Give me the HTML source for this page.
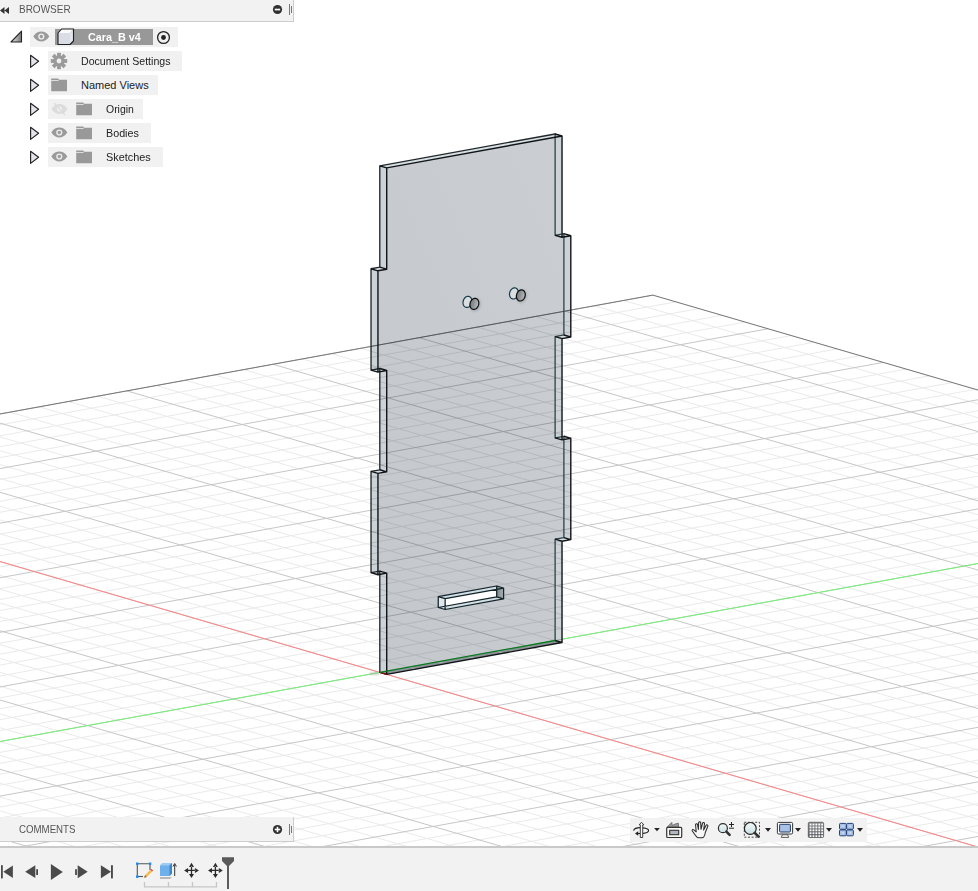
<!DOCTYPE html>
<html><head><meta charset="utf-8">
<style>
html,body{margin:0;padding:0;}
body{width:978px;height:891px;overflow:hidden;position:relative;background:#fff;font-family:"Liberation Sans",sans-serif;}
.abs{position:absolute;}
#vp{position:absolute;left:0;top:0;}
.hdr{position:absolute;left:0;width:293px;background:#f2f2f2;border-right:1px solid #cdcdcd;border-bottom:1px solid #cdcdcd;}
.hdr .t{position:absolute;left:19px;font-size:11px;color:#555;transform-origin:0 0;}
.row{position:absolute;height:20px;background:#f1f1f1;}
.lbl{position:absolute;font-size:11px;color:#222;white-space:nowrap;transform:scaleX(0.963);transform-origin:0 0;}
#bar{position:absolute;left:0;top:846px;width:978px;height:45px;background:#f2f2f2;border-top:2px solid #c9c9c9;box-sizing:border-box;}
#nav{position:absolute;left:630px;top:818px;width:237px;height:24px;background:#f2f2f2;}
</style></head>
<body>
<svg id="vp" width="978" height="846" viewBox="0 0 978 846">
<path d="M-1077.30,620.95L675.90,301.87M-1054.26,627.68L698.94,308.59M-1031.22,634.40L721.98,315.32M-1008.18,641.13L745.02,322.04M-962.10,654.58L791.10,335.50M-939.06,661.30L814.14,342.22M-916.02,668.03L837.18,348.95M-892.98,674.75L860.22,355.67M-846.90,688.20L906.30,369.12M-823.86,694.93L929.34,375.85M-800.82,701.66L952.38,382.57M-777.78,708.38L975.42,389.30M-731.70,721.83L1021.50,402.75M-708.66,728.56L1044.54,409.47M-685.62,735.28L1067.58,416.20M-662.58,742.01L1090.62,422.93M-616.50,755.46L1136.70,436.38M-593.46,762.18L1159.74,443.10M-570.42,768.91L1182.78,449.83M-547.38,775.63L1205.82,456.55M-501.30,789.09L1251.90,470.00M-478.26,795.81L1274.94,476.73M-455.22,802.54L1297.98,483.45M-432.18,809.26L1321.02,490.18M-386.10,822.71L1367.10,503.63M-363.06,829.44L1390.14,510.36M-340.02,836.16L1413.18,517.08M-316.98,842.89L1436.22,523.81M-270.90,856.34L1482.30,537.26M-247.86,863.06L1505.34,543.98M-224.82,869.79L1528.38,550.71M-201.78,876.52L1551.42,557.43M-155.70,889.97L1597.50,570.88M-132.66,896.69L1620.54,577.61M-109.62,903.42L1643.58,584.33M-86.58,910.14L1666.62,591.06M-40.50,923.59L1712.70,604.51M-17.46,930.32L1735.74,611.24M5.58,937.04L1758.78,617.96M28.62,943.77L1781.82,624.69M74.70,957.22L1827.90,638.14M97.74,963.95L1850.94,644.86M120.78,970.67L1873.98,651.59M143.82,977.40L1897.02,658.31M189.90,990.85L1943.10,671.76M212.94,997.57L1966.14,678.49M235.98,1004.30L1989.18,685.22M259.02,1011.02L2012.22,691.94M-1100.34,614.23L282.06,1017.75M-1071.12,608.91L311.28,1012.43M-1012.68,598.27L369.72,1001.79M-983.46,592.95L398.94,996.48M-954.24,587.64L428.16,991.16M-925.02,582.32L457.38,985.84M-866.58,571.68L515.82,975.20M-837.36,566.36L545.04,969.89M-808.14,561.05L574.26,964.57M-778.92,555.73L603.48,959.25M-720.48,545.09L661.92,948.61M-691.26,539.77L691.14,943.30M-662.04,534.46L720.36,937.98M-632.82,529.14L749.58,932.66M-574.38,518.50L808.02,922.02M-545.16,513.18L837.24,916.71M-515.94,507.87L866.46,911.39M-486.72,502.55L895.68,906.07M-428.28,491.91L954.12,895.43M-399.06,486.59L983.34,890.12M-369.84,481.27L1012.56,884.80M-340.62,475.96L1041.78,879.48M-282.18,465.32L1100.22,868.84M-252.96,460.00L1129.44,863.53M-223.74,454.68L1158.66,858.21M-194.52,449.37L1187.88,852.89M-136.08,438.73L1246.32,842.25M-106.86,433.41L1275.54,836.93M-77.64,428.09L1304.76,831.62M-48.42,422.78L1333.98,826.30M10.02,412.14L1392.42,815.66M39.24,406.82L1421.64,810.34M68.46,401.50L1450.86,805.03M97.68,396.19L1480.08,799.71M156.12,385.55L1538.52,789.07M185.34,380.23L1567.74,783.75M214.56,374.91L1596.96,778.44M243.78,369.60L1626.18,773.12M302.22,358.96L1684.62,762.48M331.44,353.64L1713.84,757.16M360.66,348.32L1743.06,751.85M389.88,343.01L1772.28,746.53M448.32,332.37L1830.72,735.89M477.54,327.05L1859.94,730.57M506.76,321.73L1889.16,725.26M535.98,316.42L1918.38,719.94M594.42,305.78L1976.82,709.30M623.64,300.46L2006.04,703.98M652.86,295.14L2035.26,698.67" stroke="#eaeaea" stroke-width="1" fill="none"/>
<path d="M-1100.34,614.23L652.86,295.14M-985.14,647.85L768.06,328.77M-869.94,681.48L883.26,362.40M-754.74,715.11L998.46,396.02M-639.54,748.73L1113.66,429.65M-524.34,782.36L1228.86,463.28M-409.14,815.99L1344.06,496.90M-293.94,849.61L1459.26,530.53M-178.74,883.24L1574.46,564.16M-63.54,916.87L1689.66,597.79M51.66,950.49L1804.86,631.41M166.86,984.12L1920.06,665.04M282.06,1017.75L2035.26,698.67M-1041.90,603.59L340.50,1007.11M-895.80,577.00L486.60,980.52M-749.70,550.41L632.70,953.93M-603.60,523.82L778.80,927.34M-457.50,497.23L924.90,900.75M-311.40,470.64L1071.00,874.16M-165.30,444.05L1217.10,847.57M-19.20,417.46L1363.20,820.98M126.90,390.87L1509.30,794.39M273.00,364.28L1655.40,767.80M419.10,337.69L1801.50,741.21M565.20,311.10L1947.60,714.62" stroke="#c6c6c6" stroke-width="1" fill="none"/>
<path d="M-1100.34,614.23L652.86,295.14L2035.26,698.67" stroke="#787878" stroke-width="1" fill="none"/>
<path d="M-311.40,470.64L1071.00,874.16" stroke="#ff8585" stroke-width="1" fill="none"/>
<path d="M-409.14,815.99L1344.06,496.90" stroke="#74f274" stroke-width="1" fill="none"/>
<defs><clipPath id="pc"><polygon points="379.80,672.40 379.80,571.10 371.03,572.69 371.03,471.39 379.80,469.79 379.80,368.49 371.03,370.08 371.03,268.78 379.80,267.18 379.80,165.88 555.12,133.97 555.12,235.28 563.89,233.68 563.89,334.98 555.12,336.58 555.12,437.88 563.89,436.29 563.89,537.59 555.12,539.19 555.12,640.49" /><polygon points="386.71,674.42 386.71,573.11 377.95,574.71 377.95,473.41 386.71,471.81 386.71,370.51 377.95,372.10 377.95,270.80 386.71,269.20 386.71,167.90 562.03,135.99 562.03,237.29 570.80,235.70 570.80,337.00 562.03,338.60 562.03,439.90 570.80,438.31 570.80,539.61 562.03,541.21 562.03,642.51" /><polygon points="379.80,672.40 379.80,571.10 386.71,573.11 386.71,674.42" /><polygon points="379.80,571.10 371.03,572.69 377.95,574.71 386.71,573.11" /><polygon points="371.03,572.69 371.03,471.39 377.95,473.41 377.95,574.71" /><polygon points="371.03,471.39 379.80,469.79 386.71,471.81 377.95,473.41" /><polygon points="379.80,469.79 379.80,368.49 386.71,370.51 386.71,471.81" /><polygon points="379.80,368.49 371.03,370.08 377.95,372.10 386.71,370.51" /><polygon points="371.03,370.08 371.03,268.78 377.95,270.80 377.95,372.10" /><polygon points="371.03,268.78 379.80,267.18 386.71,269.20 377.95,270.80" /><polygon points="379.80,267.18 379.80,165.88 386.71,167.90 386.71,269.20" /><polygon points="379.80,165.88 555.12,133.97 562.03,135.99 386.71,167.90" /><polygon points="555.12,133.97 555.12,235.28 562.03,237.29 562.03,135.99" /><polygon points="555.12,235.28 563.89,233.68 570.80,235.70 562.03,237.29" /><polygon points="563.89,233.68 563.89,334.98 570.80,337.00 570.80,235.70" /><polygon points="563.89,334.98 555.12,336.58 562.03,338.60 570.80,337.00" /><polygon points="555.12,336.58 555.12,437.88 562.03,439.90 562.03,338.60" /><polygon points="555.12,437.88 563.89,436.29 570.80,438.31 562.03,439.90" /><polygon points="563.89,436.29 563.89,537.59 570.80,539.61 570.80,438.31" /><polygon points="563.89,537.59 555.12,539.19 562.03,541.21 570.80,539.61" /><polygon points="555.12,539.19 555.12,640.49 562.03,642.51 562.03,541.21" /><polygon points="555.12,640.49 379.80,672.40 386.71,674.42 562.03,642.51" /></clipPath><linearGradient id="pg" x1="1" y1="0" x2="0" y2="1"><stop offset="0" stop-color="#cbcfd4"/><stop offset="1" stop-color="#c4c8cd"/></linearGradient></defs>
<g clip-path="url(#pc)"><rect x="360" y="120" width="230" height="570" fill="url(#pg)"/></g>
<polygon points="379.80,672.40 379.80,571.10 386.71,573.11 386.71,674.42" fill="#cbd3d8"/>
<polygon points="379.80,571.10 371.03,572.69 377.95,574.71 386.71,573.11" fill="#d6dfe3"/>
<polygon points="371.03,572.69 371.03,471.39 377.95,473.41 377.95,574.71" fill="#cbd3d8"/>
<polygon points="371.03,471.39 379.80,469.79 386.71,471.81 377.95,473.41" fill="#d6dfe3"/>
<polygon points="379.80,469.79 379.80,368.49 386.71,370.51 386.71,471.81" fill="#cbd3d8"/>
<polygon points="379.80,368.49 371.03,370.08 377.95,372.10 386.71,370.51" fill="#d6dfe3"/>
<polygon points="371.03,370.08 371.03,268.78 377.95,270.80 377.95,372.10" fill="#cbd3d8"/>
<polygon points="371.03,268.78 379.80,267.18 386.71,269.20 377.95,270.80" fill="#d6dfe3"/>
<polygon points="379.80,267.18 379.80,165.88 386.71,167.90 386.71,269.20" fill="#cbd3d8"/>
<polygon points="379.80,165.88 555.12,133.97 562.03,135.99 386.71,167.90" fill="#d6dfe3"/>
<polygon points="555.12,133.97 555.12,235.28 562.03,237.29 562.03,135.99" fill="#cdd2d6"/>
<polygon points="555.12,235.28 563.89,233.68 570.80,235.70 562.03,237.29" fill="#d6dfe3"/>
<polygon points="563.89,233.68 563.89,334.98 570.80,337.00 570.80,235.70" fill="#cdd2d6"/>
<polygon points="563.89,334.98 555.12,336.58 562.03,338.60 570.80,337.00" fill="#d6dfe3"/>
<polygon points="555.12,336.58 555.12,437.88 562.03,439.90 562.03,338.60" fill="#cdd2d6"/>
<polygon points="555.12,437.88 563.89,436.29 570.80,438.31 562.03,439.90" fill="#d6dfe3"/>
<polygon points="563.89,436.29 563.89,537.59 570.80,539.61 570.80,438.31" fill="#cdd2d6"/>
<polygon points="563.89,537.59 555.12,539.19 562.03,541.21 570.80,539.61" fill="#d6dfe3"/>
<polygon points="555.12,539.19 555.12,640.49 562.03,642.51 562.03,541.21" fill="#cdd2d6"/>
<polygon points="555.12,640.49 379.80,672.40 386.71,674.42 562.03,642.51" fill="#8c9398"/>
<g clip-path="url(#pc)"><path d="M-1077.30,620.95L675.90,301.87M-1054.26,627.68L698.94,308.59M-1031.22,634.40L721.98,315.32M-1008.18,641.13L745.02,322.04M-962.10,654.58L791.10,335.50M-939.06,661.30L814.14,342.22M-916.02,668.03L837.18,348.95M-892.98,674.75L860.22,355.67M-846.90,688.20L906.30,369.12M-823.86,694.93L929.34,375.85M-800.82,701.66L952.38,382.57M-777.78,708.38L975.42,389.30M-731.70,721.83L1021.50,402.75M-708.66,728.56L1044.54,409.47M-685.62,735.28L1067.58,416.20M-662.58,742.01L1090.62,422.93M-616.50,755.46L1136.70,436.38M-593.46,762.18L1159.74,443.10M-570.42,768.91L1182.78,449.83M-547.38,775.63L1205.82,456.55M-501.30,789.09L1251.90,470.00M-478.26,795.81L1274.94,476.73M-455.22,802.54L1297.98,483.45M-432.18,809.26L1321.02,490.18M-386.10,822.71L1367.10,503.63M-363.06,829.44L1390.14,510.36M-340.02,836.16L1413.18,517.08M-316.98,842.89L1436.22,523.81M-270.90,856.34L1482.30,537.26M-247.86,863.06L1505.34,543.98M-224.82,869.79L1528.38,550.71M-201.78,876.52L1551.42,557.43M-155.70,889.97L1597.50,570.88M-132.66,896.69L1620.54,577.61M-109.62,903.42L1643.58,584.33M-86.58,910.14L1666.62,591.06M-40.50,923.59L1712.70,604.51M-17.46,930.32L1735.74,611.24M5.58,937.04L1758.78,617.96M28.62,943.77L1781.82,624.69M74.70,957.22L1827.90,638.14M97.74,963.95L1850.94,644.86M120.78,970.67L1873.98,651.59M143.82,977.40L1897.02,658.31M189.90,990.85L1943.10,671.76M212.94,997.57L1966.14,678.49M235.98,1004.30L1989.18,685.22M259.02,1011.02L2012.22,691.94M-1100.34,614.23L282.06,1017.75M-1071.12,608.91L311.28,1012.43M-1012.68,598.27L369.72,1001.79M-983.46,592.95L398.94,996.48M-954.24,587.64L428.16,991.16M-925.02,582.32L457.38,985.84M-866.58,571.68L515.82,975.20M-837.36,566.36L545.04,969.89M-808.14,561.05L574.26,964.57M-778.92,555.73L603.48,959.25M-720.48,545.09L661.92,948.61M-691.26,539.77L691.14,943.30M-662.04,534.46L720.36,937.98M-632.82,529.14L749.58,932.66M-574.38,518.50L808.02,922.02M-545.16,513.18L837.24,916.71M-515.94,507.87L866.46,911.39M-486.72,502.55L895.68,906.07M-428.28,491.91L954.12,895.43M-399.06,486.59L983.34,890.12M-369.84,481.27L1012.56,884.80M-340.62,475.96L1041.78,879.48M-282.18,465.32L1100.22,868.84M-252.96,460.00L1129.44,863.53M-223.74,454.68L1158.66,858.21M-194.52,449.37L1187.88,852.89M-136.08,438.73L1246.32,842.25M-106.86,433.41L1275.54,836.93M-77.64,428.09L1304.76,831.62M-48.42,422.78L1333.98,826.30M10.02,412.14L1392.42,815.66M39.24,406.82L1421.64,810.34M68.46,401.50L1450.86,805.03M97.68,396.19L1480.08,799.71M156.12,385.55L1538.52,789.07M185.34,380.23L1567.74,783.75M214.56,374.91L1596.96,778.44M243.78,369.60L1626.18,773.12M302.22,358.96L1684.62,762.48M331.44,353.64L1713.84,757.16M360.66,348.32L1743.06,751.85M389.88,343.01L1772.28,746.53M448.32,332.37L1830.72,735.89M477.54,327.05L1859.94,730.57M506.76,321.73L1889.16,725.26M535.98,316.42L1918.38,719.94M594.42,305.78L1976.82,709.30M623.64,300.46L2006.04,703.98M652.86,295.14L2035.26,698.67" stroke="#b4b8bc" stroke-width="1" fill="none"/><path d="M-1100.34,614.23L652.86,295.14M-985.14,647.85L768.06,328.77M-869.94,681.48L883.26,362.40M-754.74,715.11L998.46,396.02M-639.54,748.73L1113.66,429.65M-524.34,782.36L1228.86,463.28M-409.14,815.99L1344.06,496.90M-293.94,849.61L1459.26,530.53M-178.74,883.24L1574.46,564.16M-63.54,916.87L1689.66,597.79M51.66,950.49L1804.86,631.41M166.86,984.12L1920.06,665.04M282.06,1017.75L2035.26,698.67M-1041.90,603.59L340.50,1007.11M-895.80,577.00L486.60,980.52M-749.70,550.41L632.70,953.93M-603.60,523.82L778.80,927.34M-457.50,497.23L924.90,900.75M-311.40,470.64L1071.00,874.16M-165.30,444.05L1217.10,847.57M-19.20,417.46L1363.20,820.98M126.90,390.87L1509.30,794.39M273.00,364.28L1655.40,767.80M419.10,337.69L1801.50,741.21M565.20,311.10L1947.60,714.62" stroke="#9a9ea2" stroke-width="1" fill="none"/><path d="M-1100.34,614.23L652.86,295.14" stroke="#55595c" stroke-width="1" fill="none"/></g>
<path d="M555.12,133.97L555.12,235.28M555.12,235.28L563.89,233.68M563.89,233.68L563.89,334.98M563.89,334.98L555.12,336.58M555.12,336.58L555.12,437.88M555.12,437.88L563.89,436.29M563.89,436.29L563.89,537.59M563.89,537.59L555.12,539.19M555.12,539.19L555.12,640.49" stroke="#2a434c" stroke-width="1.3" fill="none" stroke-linecap="round"/>
<path d="M379.80,672.40L379.80,571.10M379.80,571.10L371.03,572.69M371.03,572.69L371.03,471.39M371.03,471.39L379.80,469.79M379.80,469.79L379.80,368.49M379.80,368.49L371.03,370.08M371.03,370.08L371.03,268.78M371.03,268.78L379.80,267.18M379.80,267.18L379.80,165.88M379.80,165.88L555.12,133.97" stroke="#23282b" stroke-width="1.35" fill="none" stroke-linecap="round"/>
<path d="M386.71,674.42L386.71,573.11L377.95,574.71L377.95,473.41L386.71,471.81L386.71,370.51L377.95,372.10L377.95,270.80L386.71,269.20L386.71,167.90L562.03,135.99L562.03,237.29L570.80,235.70L570.80,337.00L562.03,338.60L562.03,439.90L570.80,438.31L570.80,539.61L562.03,541.21L562.03,642.51ZM379.80,672.40L386.71,674.42M379.80,571.10L386.71,573.11M371.03,572.69L377.95,574.71M371.03,471.39L377.95,473.41M379.80,469.79L386.71,471.81M379.80,368.49L386.71,370.51M371.03,370.08L377.95,372.10M371.03,268.78L377.95,270.80M379.80,267.18L386.71,269.20M379.80,165.88L386.71,167.90M555.12,133.97L562.03,135.99M555.12,235.28L562.03,237.29M563.89,233.68L570.80,235.70M563.89,334.98L570.80,337.00M555.12,336.58L562.03,338.60M555.12,437.88L562.03,439.90M563.89,436.29L570.80,438.31M563.89,537.59L570.80,539.61M555.12,539.19L562.03,541.21M555.12,640.49L562.03,642.51" stroke="#111517" stroke-width="1.4" fill="none" stroke-linejoin="round"/>
<path d="M379.80,672.40L386.71,674.42" stroke="#8a0a0a" stroke-width="1.4" fill="none"/>
<ellipse cx="374.80" cy="673.60" rx="5.5" ry="1.5" fill="#9a9a9a" fill-opacity="0.45" filter="url(#blur1)"/>
<path d="M379.80,672.40L555.12,640.49" stroke="#0b7a20" stroke-width="1.3" fill="none"/>
<defs><linearGradient id="hg" x1="0" y1="0" x2="1" y2="0.3"><stop offset="0" stop-color="#6c7074"/><stop offset="0.5" stop-color="#8e9194"/><stop offset="1" stop-color="#b6b9bc"/></linearGradient><linearGradient id="rg" x1="0" y1="0" x2="1" y2="0"><stop offset="0" stop-color="#7d868b"/><stop offset="1" stop-color="#aab2b6"/></linearGradient><filter id="blur1" x="-50%" y="-50%" width="200%" height="200%"><feGaussianBlur stdDeviation="1.2"/></filter></defs>
<path d="M480.80,303.81L480.75,302.93L480.61,302.07L480.38,301.26L480.06,300.51L479.65,299.84L479.17,299.25L478.63,298.76L478.02,298.37L477.37,298.09L476.69,297.92L475.97,297.88L475.25,297.95L474.52,298.14L473.81,298.45L473.12,298.86L472.47,299.38L471.87,299.99L471.32,300.68L470.84,301.44L470.44,302.26L470.12,303.13L469.89,304.02L469.74,304.93L469.70,305.84L469.74,306.72L469.89,307.58L470.12,308.39L470.44,309.14L470.84,309.81L471.32,310.40L471.87,310.89L472.47,311.28L473.12,311.56L473.81,311.73L474.52,311.77L475.25,311.70L475.97,311.51L476.69,311.20L477.37,310.79L478.02,310.27L478.63,309.66L479.17,308.97L479.65,308.21L480.06,307.39L480.38,306.52L480.61,305.63L480.75,304.72Z" fill="#7a8086" fill-opacity="0.35" filter="url(#blur1)"/>
<path d="M471.90,301.07L471.86,300.36L471.75,299.68L471.56,299.03L471.31,298.43L470.98,297.89L470.60,297.42L470.16,297.03L469.68,296.72L469.16,296.49L468.61,296.36L468.04,296.32L467.46,296.38L466.88,296.54L466.31,296.78L465.76,297.11L465.24,297.52L464.76,298.01L464.32,298.56L463.94,299.18L463.61,299.83L463.36,300.52L463.17,301.24L463.06,301.97L463.02,302.69L463.06,303.40L463.17,304.09L463.36,304.73L463.61,305.33L463.94,305.87L464.32,306.34L464.76,306.74L465.24,307.05L465.76,307.27L466.31,307.40L466.88,307.44L467.46,307.38L468.04,307.23L468.61,306.98L469.16,306.65L469.68,306.24L470.16,305.75L470.60,305.20L470.98,304.59L471.31,303.93L471.56,303.24L471.75,302.52L471.86,301.80Z" fill="#d9dee1" stroke="#173c48" stroke-width="1.2"/>
<path d="M478.81,303.09L478.78,302.38L478.66,301.70L478.48,301.05L478.22,300.45L477.90,299.91L477.51,299.44L477.08,299.04L476.59,298.73L476.07,298.51L475.52,298.38L474.95,298.34L474.37,298.40L473.79,298.55L473.22,298.80L472.67,299.13L472.15,299.54L471.67,300.03L471.23,300.58L470.85,301.19L470.53,301.85L470.27,302.54L470.08,303.26L469.97,303.98L469.93,304.71L469.97,305.42L470.08,306.10L470.27,306.75L470.53,307.35L470.85,307.89L471.23,308.36L471.67,308.75L472.15,309.07L472.67,309.29L473.22,309.42L473.79,309.46L474.37,309.40L474.95,309.25L475.52,309.00L476.07,308.67L476.59,308.26L477.08,307.77L477.51,307.22L477.90,306.61L478.22,305.95L478.48,305.26L478.66,304.54L478.78,303.82Z" fill="url(#hg)" stroke="#0e0e0e" stroke-width="1.2"/>
<path d="M527.26,295.36L527.21,294.47L527.07,293.61L526.84,292.81L526.52,292.06L526.11,291.38L525.63,290.79L525.09,290.30L524.48,289.91L523.83,289.63L523.15,289.47L522.43,289.42L521.71,289.50L520.98,289.69L520.27,289.99L519.58,290.41L518.93,290.92L518.33,291.53L517.78,292.22L517.30,292.99L516.90,293.81L516.58,294.67L516.35,295.57L516.20,296.47L516.16,297.38L516.20,298.27L516.35,299.12L516.58,299.93L516.90,300.68L517.30,301.36L517.78,301.94L518.33,302.44L518.93,302.83L519.58,303.11L520.27,303.27L520.98,303.32L521.71,303.24L522.43,303.05L523.15,302.75L523.83,302.33L524.48,301.82L525.09,301.21L525.63,300.52L526.11,299.75L526.52,298.93L526.84,298.07L527.07,297.17L527.21,296.27Z" fill="#7a8086" fill-opacity="0.35" filter="url(#blur1)"/>
<path d="M518.36,292.62L518.32,291.91L518.21,291.22L518.02,290.57L517.77,289.98L517.44,289.44L517.06,288.97L516.62,288.57L516.14,288.26L515.62,288.04L515.07,287.91L514.50,287.87L513.92,287.93L513.34,288.08L512.77,288.32L512.22,288.65L511.70,289.07L511.22,289.56L510.78,290.11L510.40,290.72L510.07,291.38L509.82,292.07L509.63,292.78L509.52,293.51L509.48,294.23L509.52,294.95L509.63,295.63L509.82,296.28L510.07,296.88L510.40,297.42L510.78,297.89L511.22,298.28L511.70,298.59L512.22,298.82L512.77,298.95L513.34,298.98L513.92,298.93L514.50,298.77L515.07,298.53L515.62,298.20L516.14,297.78L516.62,297.30L517.06,296.74L517.44,296.13L517.77,295.48L518.02,294.78L518.21,294.07L518.32,293.34Z" fill="#d9dee1" stroke="#173c48" stroke-width="1.2"/>
<path d="M525.27,294.64L525.24,293.92L525.12,293.24L524.94,292.59L524.68,291.99L524.36,291.45L523.97,290.98L523.54,290.59L523.05,290.28L522.53,290.05L521.98,289.92L521.41,289.89L520.83,289.94L520.25,290.10L519.68,290.34L519.13,290.67L518.61,291.09L518.13,291.57L517.69,292.13L517.31,292.74L516.99,293.39L516.73,294.09L516.54,294.80L516.43,295.53L516.39,296.25L516.43,296.96L516.54,297.65L516.73,298.30L516.99,298.89L517.31,299.43L517.69,299.90L518.13,300.30L518.61,300.61L519.13,300.83L519.68,300.96L520.25,301.00L520.83,300.94L521.41,300.79L521.98,300.55L522.53,300.22L523.05,299.80L523.54,299.31L523.97,298.76L524.36,298.15L524.68,297.49L524.94,296.80L525.12,296.09L525.24,295.36Z" fill="url(#hg)" stroke="#0e0e0e" stroke-width="1.2"/>
<polygon points="438.24,607.49 438.24,596.64 445.15,598.66 445.15,609.51" fill="#dfe7ea"/>
<polygon points="438.24,596.64 496.68,586.00 503.59,588.02 445.15,598.66" fill="#cfdfe5"/>
<polygon points="438.24,607.49 496.68,596.86 503.59,598.88 445.15,609.51" fill="#d3e0e5"/>
<polygon points="496.68,596.86 496.68,586.00 503.59,588.02 503.59,598.88" fill="url(#rg)"/>
<polygon points="445.15,606.24 496.68,596.86 496.68,589.28 445.15,598.66" fill="#ffffff"/>
<path d="M438.24,607.49L496.68,596.86L496.68,586.00L438.24,596.64Z M445.15,609.51L503.59,598.88L503.59,588.02L445.15,598.66Z M438.24,607.49L445.15,609.51M496.68,596.86L503.59,598.88M496.68,586.00L503.59,588.02M438.24,596.64L445.15,598.66" stroke="#14232a" stroke-width="1.25" fill="none" stroke-linejoin="round"/>
</svg>

<!-- Browser header -->
<div class="hdr" style="top:0;height:21px;">
  <svg class="abs" style="left:0;top:6px" width="10" height="9" viewBox="0 0 10 9"><path d="M0 4.5L4.5 1V8Z M4.5 4.5L9 1V8Z" fill="#333"/></svg>
  <div class="t" style="top:3px;transform:scaleX(0.908)">BROWSER</div>
  <svg class="abs" style="left:272px;top:4px" width="11" height="11" viewBox="0 0 11 11"><circle cx="5.5" cy="5.5" r="4.6" fill="#303030"/><rect x="2.8" y="4.7" width="5.4" height="1.7" fill="#fff"/></svg>
  <div class="abs" style="left:289px;top:4px;width:1px;height:11px;background:#777"></div>
  <div class="abs" style="left:291px;top:6px;width:1px;height:7px;background:#777"></div>
</div>

<!-- tree -->
<svg class="abs" style="left:10px;top:30px" width="13" height="13" viewBox="0 0 13 13"><defs><linearGradient id="tg" x1="0" y1="0" x2="1" y2="0"><stop offset="0" stop-color="#eee"/><stop offset="1" stop-color="#777"/></linearGradient></defs><path d="M1 12L11.5 1.2V12Z" fill="url(#tg)" stroke="#222" stroke-width="1.1" stroke-linejoin="round"/></svg>
<div class="row" style="left:30px;top:27px;width:148px;"></div>
<svg class="abs" style="left:33px;top:31px" width="17" height="12" viewBox="0 0 17 12"><path d="M0.3 5.5C2.5 1.8 5.5 0.6 8.3 0.6S14.1 1.8 16.3 5.5C14.1 9.2 11.1 10.4 8.3 10.4S2.5 9.2 0.3 5.5Z" fill="#9a9a9a"/><circle cx="8.3" cy="5.5" r="3.1" fill="#ececec"/><circle cx="8.3" cy="5.5" r="1.7" fill="#9a9a9a"/></svg>
<div class="abs" style="left:55px;top:29px;width:98px;height:16px;background:#989898;"></div>
<svg class="abs" style="left:57px;top:28px" width="18" height="18" viewBox="57 28 18 18"><path d="M58 33L61.6 29H73.5L70 33Z" fill="#fafafa"/><path d="M70 33L73.5 29V41L70 44.5Z" fill="#e3e5ec"/><path d="M58 33H70V44.5H58Z" fill="#dadde5"/><path d="M58 33L61.6 29H73.5V41L70 44.5H58Z" fill="none" stroke="#1e1e1e" stroke-width="1.1" stroke-linejoin="round"/></svg>
<div class="lbl" style="left:88px;top:31px;color:#fff;font-weight:bold;transform:scaleX(0.98)">Cara_B v4</div>
<svg class="abs" style="left:156px;top:30px" width="15" height="15" viewBox="0 0 15 15"><circle cx="7.5" cy="7.5" r="5.9" fill="none" stroke="#222" stroke-width="1.3"/><circle cx="7.5" cy="7.5" r="2.4" fill="#222"/></svg>

<!-- expand arrows -->
<svg class="abs" style="left:29px;top:54px" width="12" height="115" viewBox="0 0 12 115">
 <g fill="#e3e5ea" stroke="#222" stroke-width="1.15" stroke-linejoin="round">
  <path d="M1.6 1.2L9.6 7.2L1.6 13.4Z"/>
  <path d="M1.6 25.2L9.6 31.2L1.6 37.4Z"/>
  <path d="M1.6 49.2L9.6 55.2L1.6 61.4Z"/>
  <path d="M1.6 73.2L9.6 79.2L1.6 85.4Z"/>
  <path d="M1.6 97.2L9.6 103.2L1.6 109.4Z"/>
 </g>
</svg>

<div class="row" style="left:48px;top:51px;width:134px;"></div>
<div class="row" style="left:48px;top:75px;width:110px;"></div>
<div class="row" style="left:48px;top:99px;width:95px;"></div>
<div class="row" style="left:48px;top:123px;width:103px;"></div>
<div class="row" style="left:48px;top:147px;width:115px;"></div>

<!-- gear -->
<svg class="abs" style="left:50px;top:52px" width="18" height="18" viewBox="0 0 18 18"><g transform="translate(9 9)" fill="#9a9a9a"><circle r="5.6"/><g id="th"><rect x="-1.9" y="-8.2" width="3.8" height="4"/></g><use href="#th" transform="rotate(45)"/><use href="#th" transform="rotate(90)"/><use href="#th" transform="rotate(135)"/><use href="#th" transform="rotate(180)"/><use href="#th" transform="rotate(225)"/><use href="#th" transform="rotate(270)"/><use href="#th" transform="rotate(315)"/><circle r="2.4" fill="#efefef"/></g></svg>
<div class="lbl" style="left:81px;top:55px;">Document Settings</div>
<!-- folder named views -->
<svg class="abs" style="left:51px;top:78px" width="17" height="14" viewBox="0 0 17 14"><path d="M0.2 0.6H7L8.2 1.8H16V13.2H0.2Z" fill="#999"/><path d="M0.2 2.5H7.6" stroke="#efefef" stroke-width="0.8"/></svg>
<div class="lbl" style="left:81px;top:79px;transform:none">Named Views</div>
<!-- origin -->
<svg class="abs" style="left:51px;top:102px" width="17" height="14" viewBox="0 0 17 14"><path d="M0.5 7C3 3 6 2 8.5 2S14 3 16.5 7C14 11 11 12 8.5 12S3 11 0.5 7Z" fill="#dcdcdc"/><circle cx="8.5" cy="7" r="2.6" fill="#efefef"/><path d="M3 1L14 13" stroke="#dcdcdc" stroke-width="1.2"/></svg>
<svg class="abs" style="left:76px;top:102px" width="17" height="14" viewBox="0 0 17 14"><path d="M0.2 0.6H7L8.2 1.8H16V13.2H0.2Z" fill="#999"/><path d="M0.2 2.5H7.6" stroke="#efefef" stroke-width="0.8"/></svg>
<div class="lbl" style="left:106px;top:103px;transform:scaleX(0.95)">Origin</div>
<!-- bodies -->
<svg class="abs" style="left:51px;top:127px" width="17" height="12" viewBox="0 0 17 12"><path d="M0.3 5.5C2.5 1.8 5.5 0.6 8.3 0.6S14.1 1.8 16.3 5.5C14.1 9.2 11.1 10.4 8.3 10.4S2.5 9.2 0.3 5.5Z" fill="#9a9a9a"/><circle cx="8.3" cy="5.5" r="3.1" fill="#ececec"/><circle cx="8.3" cy="5.5" r="1.7" fill="#9a9a9a"/></svg>
<svg class="abs" style="left:76px;top:126px" width="17" height="14" viewBox="0 0 17 14"><path d="M0.2 0.6H7L8.2 1.8H16V13.2H0.2Z" fill="#999"/><path d="M0.2 2.5H7.6" stroke="#efefef" stroke-width="0.8"/></svg>
<div class="lbl" style="left:106px;top:127px;transform:scaleX(0.976)">Bodies</div>
<!-- sketches -->
<svg class="abs" style="left:51px;top:151px" width="17" height="12" viewBox="0 0 17 12"><path d="M0.3 5.5C2.5 1.8 5.5 0.6 8.3 0.6S14.1 1.8 16.3 5.5C14.1 9.2 11.1 10.4 8.3 10.4S2.5 9.2 0.3 5.5Z" fill="#9a9a9a"/><circle cx="8.3" cy="5.5" r="3.1" fill="#ececec"/><circle cx="8.3" cy="5.5" r="1.7" fill="#9a9a9a"/></svg>
<svg class="abs" style="left:76px;top:150px" width="17" height="14" viewBox="0 0 17 14"><path d="M0.2 0.6H7L8.2 1.8H16V13.2H0.2Z" fill="#999"/><path d="M0.2 2.5H7.6" stroke="#efefef" stroke-width="0.8"/></svg>
<div class="lbl" style="left:106px;top:151px;transform:scaleX(0.99)">Sketches</div>

<!-- Comments -->
<div class="hdr" style="top:817px;height:24px;">
  <div class="t" style="top:6px;transform:scaleX(0.88)">COMMENTS</div>
  <svg class="abs" style="left:272px;top:7px" width="11" height="11" viewBox="0 0 11 11"><circle cx="5.5" cy="5.5" r="4.6" fill="#303030"/><rect x="2.8" y="4.7" width="5.4" height="1.6" fill="#fff"/><rect x="4.7" y="2.8" width="1.6" height="5.4" fill="#fff"/></svg>
  <div class="abs" style="left:289px;top:7px;width:1px;height:11px;background:#777"></div>
  <div class="abs" style="left:291px;top:9px;width:1px;height:7px;background:#777"></div>
</div>

<!-- nav toolbar -->
<div id="nav"></div>
<svg class="abs" style="left:630px;top:818px" width="240" height="24" viewBox="630 818 240 24">
 <defs>
  <linearGradient id="gg" x1="0" y1="0" x2="0" y2="1"><stop offset="0" stop-color="#8a8a8a"/><stop offset="1" stop-color="#4a4f58"/></linearGradient>
  <linearGradient id="mg" x1="0" y1="0" x2="0" y2="1"><stop offset="0" stop-color="#f4fafa"/><stop offset="1" stop-color="#c9dfe2"/></linearGradient>
 </defs>
 <!-- orbit -->
 <path d="M633.6 830.6C634 828.5 637.5 827.6 640.5 827.6" fill="none" stroke="#222" stroke-width="1.1"/>
 <path d="M643 827.9C646.5 828.3 648.6 829.3 648.6 830.6C648.6 832 646 833.1 643 833.4" fill="none" stroke="#222" stroke-width="1.1"/>
 <path d="M640 833.5H636.8" stroke="#222" stroke-width="1.1"/>
 <path d="M638.2 831.2L635 833.5L638.2 835.8Z" fill="#222"/>
 <path d="M640.3 837.5V824.8H639.2L641.5 822.3L643.8 824.8H642.7V837.5Z" fill="#fff" stroke="#2a2a2a" stroke-width="0.9" stroke-linejoin="round"/>
 <path d="M654.1 828.1H659.8L656.95 831.3Z" fill="#222"/>
 <!-- look at -->
 <path d="M667 827.2L671.8 822.4L672.2 825.4C674 824.4 676.3 823.4 678.4 823.2L678.6 827.2Z" fill="#9a9a9a" stroke="#555" stroke-width="0.7"/>
 <rect x="666.7" y="827.3" width="15" height="10.2" rx="1" fill="#fbfbfb" stroke="#333" stroke-width="1.2"/>
 <rect x="669.7" y="830.3" width="9" height="4.4" fill="#b1b6c2" stroke="#333" stroke-width="1.1"/>
 <!-- hand -->
 <path d="M699 837.8C696.5 837.8 695.5 835.5 694.5 834L692.3 831C691.7 830 692.8 829 693.8 829.8L696.2 831.8L695.6 825C695.4 823.6 697.3 823.4 697.6 824.8L698.4 829.5L698.6 822.8C698.6 821.5 700.6 821.5 700.7 822.8L701 829.3L702.5 823.3C702.8 822 704.7 822.3 704.5 823.7L703.6 830L706 825.4C706.6 824.2 708.3 824.9 707.8 826.2L705.3 832.5C704.8 835.5 704 837.8 702 837.8Z" fill="#f6f6f8" stroke="#2a2a2a" stroke-width="1.05" stroke-linejoin="round"/>
 <!-- zoom -->
 <circle cx="722.9" cy="828.2" r="4.5" fill="url(#mg)" stroke="#2e2e2e" stroke-width="1.2"/>
 <path d="M726.4 831.7L729.6 834.9" stroke="#333" stroke-width="2.6" stroke-linecap="round"/>
 <path d="M729 824.5H734M731.5 822V827M729 828.2H734" stroke="#222" stroke-width="1"/>
 <!-- zoom window -->
 <rect x="744.3" y="822.3" width="15.2" height="14.9" fill="none" stroke="#333" stroke-width="0.9" stroke-dasharray="2 1.6"/>
 <circle cx="750.3" cy="828.4" r="5.9" fill="url(#mg)" stroke="#222" stroke-width="1.2"/>
 <path d="M754.7 832.8L758.4 836.5" stroke="#333" stroke-width="2.6" stroke-linecap="round"/>
 <path d="M765 828H771L768 831.8Z" fill="#222"/>
 <!-- display -->
 <rect x="777.4" y="822.4" width="15.2" height="11.6" rx="1.2" fill="#fff" stroke="#333" stroke-width="1"/>
 <rect x="779.6" y="824.3" width="10.8" height="7.7" rx="0.8" fill="#a9c3e6" stroke="#20386a" stroke-width="1"/>
 <path d="M782.3 834.8H787.7L788.6 837.4H781.4Z" fill="#fff" stroke="#333" stroke-width="0.8" stroke-linejoin="round"/>
 <path d="M795 828H801L798 831.8Z" fill="#222"/>
 <!-- grid -->
 <rect x="808.3" y="822.3" width="15.3" height="15.2" rx="1.2" fill="url(#gg)" stroke="#555" stroke-width="0.8"/>
 <rect x="809.60" y="823.60" width="1.9" height="1.9" fill="#fafafa"/><rect x="812.50" y="823.60" width="1.9" height="1.9" fill="#fafafa"/><rect x="815.40" y="823.60" width="1.9" height="1.9" fill="#fafafa"/><rect x="818.30" y="823.60" width="1.9" height="1.9" fill="#fafafa"/><rect x="821.20" y="823.60" width="1.9" height="1.9" fill="#fafafa"/><rect x="809.60" y="826.50" width="1.9" height="1.9" fill="#fafafa"/><rect x="812.50" y="826.50" width="1.9" height="1.9" fill="#fafafa"/><rect x="815.40" y="826.50" width="1.9" height="1.9" fill="#fafafa"/><rect x="818.30" y="826.50" width="1.9" height="1.9" fill="#fafafa"/><rect x="821.20" y="826.50" width="1.9" height="1.9" fill="#fafafa"/><rect x="809.60" y="829.40" width="1.9" height="1.9" fill="#fafafa"/><rect x="812.50" y="829.40" width="1.9" height="1.9" fill="#fafafa"/><rect x="815.40" y="829.40" width="1.9" height="1.9" fill="#fafafa"/><rect x="818.30" y="829.40" width="1.9" height="1.9" fill="#fafafa"/><rect x="821.20" y="829.40" width="1.9" height="1.9" fill="#fafafa"/><rect x="809.60" y="832.30" width="1.9" height="1.9" fill="#fafafa"/><rect x="812.50" y="832.30" width="1.9" height="1.9" fill="#fafafa"/><rect x="815.40" y="832.30" width="1.9" height="1.9" fill="#fafafa"/><rect x="818.30" y="832.30" width="1.9" height="1.9" fill="#fafafa"/><rect x="821.20" y="832.30" width="1.9" height="1.9" fill="#fafafa"/><rect x="809.60" y="835.20" width="1.9" height="1.9" fill="#fafafa"/><rect x="812.50" y="835.20" width="1.9" height="1.9" fill="#fafafa"/><rect x="815.40" y="835.20" width="1.9" height="1.9" fill="#fafafa"/><rect x="818.30" y="835.20" width="1.9" height="1.9" fill="#fafafa"/><rect x="821.20" y="835.20" width="1.9" height="1.9" fill="#fafafa"/>
 <path d="M826 828H832L829 831.8Z" fill="#222"/>
 <!-- viewports -->
 <g fill="#a9c2e6" stroke="#23427a" stroke-width="1">
  <rect x="839.5" y="823.4" width="6.8" height="5.9" rx="1"/>
  <rect x="846.6" y="823.4" width="6.8" height="5.9" rx="1"/>
  <rect x="839.5" y="829.9" width="6.8" height="5.9" rx="1"/>
  <rect x="846.6" y="829.9" width="6.8" height="5.9" rx="1"/>
 </g>
 <g fill="#c8d8ee">
  <rect x="841.6" y="825.5" width="2.6" height="1.6"/><rect x="848.7" y="825.5" width="2.6" height="1.6"/>
  <rect x="841.6" y="832" width="2.6" height="1.6"/><rect x="848.7" y="832" width="2.6" height="1.6"/>
 </g>
 <path d="M857 828H863L860 831.8Z" fill="#222"/>
</svg>

<!-- bottom bar -->
<div id="bar"></div>
<svg class="abs" style="left:0;top:848px" width="260" height="43" viewBox="0 848 260 43">
 <g fill="#4a4a4a">
  <rect x="1" y="865.2" width="1.8" height="13.2"/>
  <path d="M3.3 871.8L12.9 865.6V878Z"/>
  <path d="M25.2 871.7L35.3 865.3V878Z"/>
  <rect x="36.2" y="869.2" width="1.8" height="5.8"/>
  <path d="M50.9 864V880L62.8 872Z"/>
  <rect x="75.1" y="869.2" width="1.8" height="5.8"/>
  <path d="M77.7 865.2V878.2L87.7 871.7Z"/>
  <path d="M100.9 865.3V878.3L111 871.8Z"/>
  <rect x="111" y="865.2" width="1.9" height="13.2"/>
 </g>
 <!-- sketch icon -->
 <path d="M137.3 876.5V863.7H150V870" fill="none" stroke="#555" stroke-width="1.1"/>
 <path d="M137.3 876.5H143" fill="none" stroke="#555" stroke-width="1.1"/>
 <rect x="136" y="862.5" width="2.4" height="2.4" fill="#1a8cff"/>
 <rect x="148.9" y="862.5" width="2.4" height="2.4" fill="#1a8cff"/>
 <rect x="136" y="875.5" width="2.4" height="2.4" fill="#1a8cff"/>
 <path d="M144.2 877.7L145 875.3L150.5 869.8L152.2 871.5L146.7 877Z" fill="#f5b94a"/>
 <path d="M150.5 869.8L151.4 868.9L153.1 870.6L152.2 871.5Z" fill="#e8343a"/>
 <path d="M144.2 877.7L145 875.3L146.7 877Z" fill="#666"/>
 <!-- extrude -->
 <path d="M160 877V879H170L172 877Z" fill="#b8b8b8"/>
 <path d="M160 865.5L162.5 863H172V873.5L169.5 876H160Z" fill="#6eb0ec"/>
 <path d="M169.5 865.5H160L162.5 863H172Z" fill="#9cccf4"/>
 <path d="M169.5 865.5V876L172 873.5V863Z" fill="#3f86c8"/>
 <path d="M174.7 876V864.5M173 866.5L174.7 863.5L176.4 866.5" fill="none" stroke="#333" stroke-width="1"/>
 <!-- move icons -->
 <path d="M187.7 869.75H195.3V871.05H187.7Z M190.85 866.6H192.15V874.1999999999999H190.85Z M191.5 862.8L189.0 866.9H194.0Z M191.5 878.0L189.0 873.9H194.0Z M184.1 870.4L188.1 867.9V872.9Z M198.9 870.4L194.9 867.9V872.9Z" fill="#2a2a2a"/>
 <path d="M211.6 869.75H219.20000000000002V871.05H211.6Z M214.75 866.6H216.05V874.1999999999999H214.75Z M215.4 862.8L212.9 866.9H217.9Z M215.4 878.0L212.9 873.9H217.9Z M208.0 870.4L212.0 867.9V872.9Z M222.8 870.4L218.8 867.9V872.9Z" fill="#2a2a2a"/>
 <!-- bracket -->
 <path d="M144.5 882V886.8H216.5V882M168.5 882V886.8M192.5 882V886.8" fill="none" stroke="#c6c6c6" stroke-width="1.3"/>
 <!-- marker -->
 <path d="M222 857.2H234V861L229 866V889H227V866L222 861Z" fill="#5a5a5a"/>
</svg>

</body></html>
